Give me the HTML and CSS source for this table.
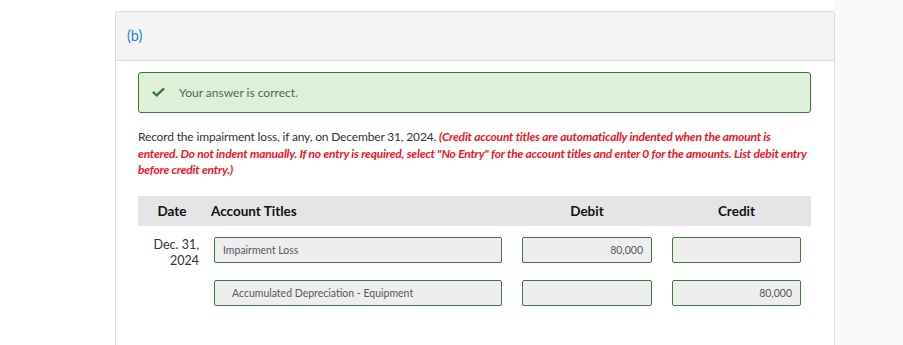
FILE: index.html
```html
<!DOCTYPE html>
<html lang="en">
<head>
    <meta charset="UTF-8">
    <meta name="viewport" content="width=device-width, initial-scale=1.0">
    <title>Part (b) - Journal Entry</title>
    <link rel="stylesheet" href="styles.css">
</head>
<body>
    <div class="page">
        <main class="main">
            <section class="panel">
                <div class="panel-header">(b)</div>
                <div class="panel-body">
                    <div class="result correct">
                        <svg class="check" viewBox="0 0 16 12" width="15" height="11">
                            <path d="M1 6.2 L2.8 4.4 L6 7.4 L13.2 0.6 L15 2.4 L6 11 Z" fill="#3c763d"/>
                        </svg>
                        <span>Your answer is correct.</span>
                    </div>

                    <p class="instructions">Record the impairment loss, if any, on December 31, 2024. <em class="note">(Credit account titles are automatically indented when the amount is<br>entered. Do not indent manually. If no entry is required, select "No Entry" for the account titles and enter 0 for the amounts. List debit entry<br>before credit entry.)</em></p>

                    <div class="journal">
                        <div class="journal-head">
                            <div class="col-date">Date</div>
                            <div class="col-title">Account Titles</div>
                            <div class="col-amount">Debit</div>
                            <div class="col-amount">Credit</div>
                        </div>

                        <div class="journal-row">
                            <div class="col-date date">Dec. 31,<br>2024</div>
                            <div class="col-title"><div class="field">Impairment Loss</div></div>
                            <div class="col-amount"><div class="field num">80,000</div></div>
                            <div class="col-amount"><div class="field num"></div></div>
                        </div>

                        <div class="journal-row">
                            <div class="col-date date"></div>
                            <div class="col-title"><div class="field indent">Accumulated Depreciation - Equipment</div></div>
                            <div class="col-amount"><div class="field num"></div></div>
                            <div class="col-amount"><div class="field num">80,000</div></div>
                        </div>
                    </div>
                </div>
            </section>
        </main>
        <aside class="side"></aside>
    </div>
</body>
</html>
```

FILE: styles.css
```css
* {
    margin: 0;
    padding: 0;
    box-sizing: border-box;
}

body {
    font-family: Lato, "Open Sans", sans-serif;
    color: #333;
    background: #fff;
}

.page {
    display: flex;
    min-height: 100vh;
}

.main {
    width: 835px;
    padding: 11px 0 0 115px;
}

.side {
    flex: 1;
    background: #fafafa;
}

.panel {
    border: 1px solid #ddd;
    border-bottom: none;
    border-radius: 3px 3px 0 0;
    background: #fff;
    min-height: 360px;
}

.panel-header {
    height: 49px;
    background: #f4f4f4;
    border-bottom: 1px solid #ddd;
    padding: 15px 11px 0;
    font-size: 14.5px;
    color: #1a86c8;
}

.panel-body {
    padding: 11px 23px 0 22px;
}

.result {
    display: flex;
    align-items: center;
    height: 41px;
    padding: 0 0 0 12px;
    border: 1px solid #3c763d;
    border-radius: 3px;
    font-size: 12px;
}

.result.correct {
    background: #dff0d8;
    color: #4d6b50;
}

.check {
    margin-right: 13px;
}

.instructions {
    margin: 16px -8px 0 0;
    font-size: 12px;
    line-height: 16.5px;
    letter-spacing: -0.16px;
}

.note {
    color: #f0141e;
    font-weight: bold;
    letter-spacing: -0.2px;
}

.journal {
    margin-top: 17px;
    width: 673px;
}

.journal-head,
.journal-row {
    display: grid;
    grid-template-columns: 68px 306px 150px 149px;
}

.journal-head {
    height: 30px;
    align-items: center;
    background: #e5e5e5;
    font-size: 13.5px;
    font-weight: bold;
    color: #111;
}

.journal-head .col-date,
.journal-head .col-amount {
    text-align: center;
}

.journal-head .col-title {
    padding-left: 5px;
}

.journal-row {
    margin-top: 11px;
    height: 32px;
}

.date {
    text-align: right;
    padding: 0 7px 0 0;
    font-size: 12.5px;
    line-height: 16px;
}

.journal-row .col-title {
    padding: 0 10px 0 8px;
}

.journal-row .col-amount {
    padding: 0 10px;
}

.field {
    height: 26px;
    line-height: 24px;
    border: 1px solid #3f7a3c;
    border-radius: 2px;
    background: #eee;
    font-size: 10.5px;
    color: #5a5560;
    padding: 0 8px;
    white-space: nowrap;
}

.field.indent {
    padding-left: 17px;
}

.field.num {
    text-align: right;
}
```
